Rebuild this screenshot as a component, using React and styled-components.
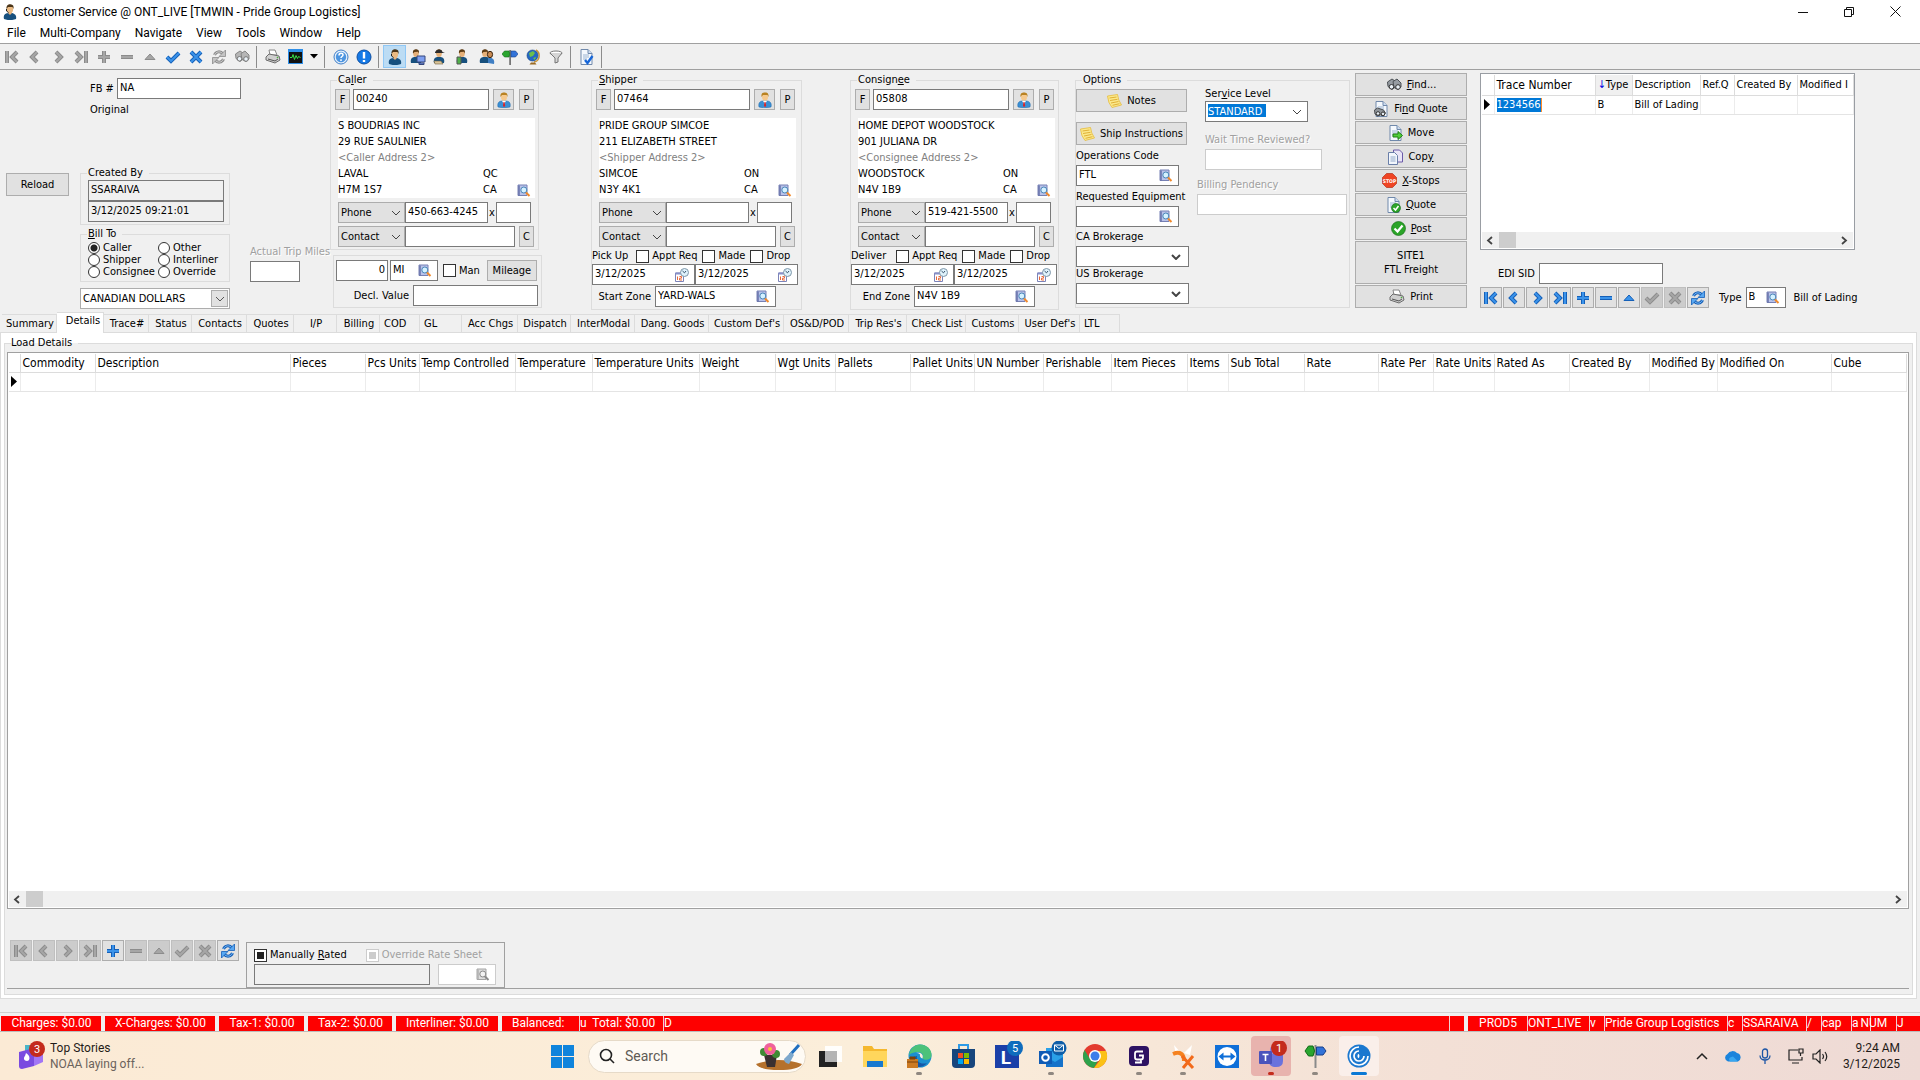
import React, { useId } from "react";
import styled, { createGlobalStyle, css } from "styled-components";

const formFont = '"DejaVu Sans Condensed", "DejaVu Sans", sans-serif';
const shellFont = 'Roboto, "Noto Sans", sans-serif';

const chevron = (color, width) =>
  `url("data:image/svg+xml,%3Csvg xmlns='http://www.w3.org/2000/svg' width='10' height='6'%3E%3Cpath d='M1 1l4 4 4-4' fill='none' stroke='%23${color}' stroke-width='${width}'/%3E%3C/svg%3E")`;

const GlobalStyle = createGlobalStyle`
  * { box-sizing: border-box; }
  body { margin: 0; background: #f0f0f0; }
  button, input, select { font: inherit; color: inherit; margin: 0; border-radius: 0; }
  fieldset { margin: 0; padding: 0; min-width: 0; }
  legend { padding: 0; }
  svg { display: block; flex: none; }
`;

/* ---------- window frame ---------- */

const Desktop = styled.div`
  min-height: 100vh;
  display: flex;
  flex-direction: column;
  background: #f0f0f0;
  color: #000;
  font: 11px/14px ${formFont};
  overflow: hidden;
`;

const TitleBar = styled.header`
  display: flex;
  align-items: center;
  gap: 5px;
  height: 23px;
  padding: 0 2px;
  background: #fff;
  font: 12px/16px ${shellFont};
`;

const WindowButtons = styled.div`
  display: flex;
  margin-left: auto;
`;

const WindowButton = styled.button`
  display: grid;
  place-items: center;
  width: 46px;
  height: 20px;
  padding: 0;
  border: 0;
  background: none;
`;

const MenuBar = styled.nav`
  display: flex;
  gap: 14px;
  height: 20px;
  padding-left: 7px;
  background: #fff;
  font: 12px/20px ${shellFont};
`;

const MenuItem = styled.button`
  padding: 0;
  border: 0;
  background: none;
`;

const Toolbar = styled.div`
  display: flex;
  align-items: center;
  height: 27px;
  border-top: 1px solid #a0a0a0;
  border-bottom: 1px solid #a0a0a0;
`;

const ToolButton = styled.button`
  display: grid;
  place-items: center;
  width: ${(p) => (p.$narrow ? 14 : 23)}px;
  height: 23px;
  padding: 0;
  border: 1px solid ${(p) => (p.$on ? "#90c8f6" : "transparent")};
  background: ${(p) => (p.$on ? "#bcdcf4" : "none")};
`;

const ToolDivider = styled.span`
  width: 1px;
  height: 22px;
  margin: 0 4px 0 3px;
  background: #8c8c8c;
`;

/* ---------- form controls ---------- */

const Button = styled.button`
  display: flex;
  align-items: center;
  justify-content: center;
  gap: 5px;
  flex: none;
  width: ${(p) => p.$w}px;
  height: ${(p) => p.$h || 21}px;
  padding: 0;
  border: 1px solid #adadad;
  background: #e1e1e1;
  white-space: pre-line;
`;

const TextBox = styled.input`
  display: block;
  flex: none;
  width: ${(p) => p.$w}px;
  height: 21px;
  padding: 0 2px 2px;
  border: 1px solid ${(p) => (p.disabled ? "#cccccc" : "#7a7a7a")};
  background: ${(p) => (p.readOnly ? "#f0f0f0" : "#fff")};
  text-align: ${(p) => (p.$right ? "right" : "left")};
  outline: 0;
`;

const Caption = styled.label`
  display: block;
  white-space: nowrap;
  color: ${(p) => (p.$dim ? "#a0a0a0" : "#000")};
  text-shadow: ${(p) => (p.$dim ? "1px 1px 0 #fff" : "none")};
  width: ${(p) => (p.$w ? `${p.$w}px` : "auto")};
  text-align: ${(p) => (p.$w ? "right" : "left")};
  margin-top: ${(p) => p.$mt || 0}px;
`;

const Combo = styled.select`
  appearance: none;
  display: block;
  flex: none;
  width: ${(p) => p.$w}px;
  height: 21px;
  padding: 0 2px;
  border: 1px solid ${(p) => (p.$gray ? "#adadad" : "#7a7a7a")};
  background: ${(p) => (p.$gray ? "#e1e1e1" : "#fff")} ${(p) => chevron("444444", p.$bold ? 2 : 1)}
    no-repeat right ${(p) => (p.$gray ? 3 : 7)}px center;
  outline: 0;
`;

const CurrencyFrame = styled.div`
  display: flex;
  width: 150px;
  height: 21px;
  margin-top: 6px;
  border: 1px solid #adadad;
  background: #fff;
`;

const CurrencySelect = styled.select`
  appearance: none;
  flex: 1;
  padding: 0 2px;
  border: 0;
  outline: 0;
  background: ${chevron("555555", 1)} no-repeat right 4px center,
    linear-gradient(#e1e1e1, #e1e1e1) no-repeat right 2px center / 15px 15px,
    linear-gradient(#adadad, #adadad) no-repeat right 1px center / 17px 17px;
`;

const LevelFrame = styled.div`
  display: grid;
  align-items: center;
  width: 103px;
  height: 21px;
  padding: 2px;
  border: 1px solid #7a7a7a;
  background: #fff;
`;

const LevelSelect = styled.select`
  appearance: none;
  width: 97px;
  height: 15px;
  padding: 0;
  border: 0;
  outline: 0;
  color: #fff;
  background: ${chevron("444444", 1)} no-repeat right 3px center,
    linear-gradient(#0078d7, #0078d7) no-repeat left top / 58px 13px;
  line-height: 13px;
`;

const Field = styled.div`
  display: flex;
  align-items: center;
  flex: none;
  width: ${(p) => p.$w}px;
  height: 21px;
  padding-right: 5px;
  border: 1px solid ${(p) => (p.$dim ? "#cccccc" : "#7a7a7a")};
  background: #fff;
`;

const FieldInput = styled.input`
  flex: 1;
  min-width: 0;
  padding: 0 2px 2px;
  border: 0;
  background: none;
  outline: 0;
`;

const IconButton = styled.button`
  padding: 0;
  border: 0;
  background: none;
`;

const CheckInput = styled.input`
  appearance: none;
  width: 13px;
  height: 13px;
  border: 1px solid ${(p) => (p.disabled ? "#cccccc" : "#333")};
  background: ${(p) => (p.$mixed ? (p.disabled ? "#cccccc" : "#222") : "#fff")};
  box-shadow: inset 0 0 0 2px #fff;
`;

const RadioInput = styled.input`
  appearance: none;
  width: 12px;
  height: 12px;
  border: 1px solid #333;
  border-radius: 50%;
  background: #fff;
  &:checked { background: radial-gradient(circle, #222 0 3px, #fff 4px); }
`;

const Choice = styled.label`
  display: flex;
  align-items: center;
  gap: 3px;
  white-space: nowrap;
  color: ${(p) => (p.$dim ? "#a0a0a0" : "#000")};
  line-height: ${(p) => (p.$tight ? 12 : 14)}px;
`;

const Row = styled.div`
  display: flex;
  align-items: ${(p) => p.$align || "center"};
  gap: ${(p) => p.$gap || 0}px;
  margin-top: ${(p) => p.$mt || 0}px;
  padding-left: ${(p) => p.$pl || 0}px;
`;

const Stack = styled.div`
  display: flex;
  flex-direction: column;
  align-items: flex-start;
  margin-top: ${(p) => p.$mt || 0}px;
  padding-left: ${(p) => p.$pl || 0}px;
`;

const Group = styled.fieldset`
  width: ${(p) => p.$w}px;
  border: 1px solid #dcdcdc;
  padding-bottom: ${(p) => p.$pb || 0}px;
`;

const Legend = styled.legend`
  margin-left: ${(p) => (p.$near ? 4 : 6)}px;
  padding: 0 6px 0 ${(p) => (p.$near ? 0 : 1)}px;
`;

/* ---------- form area ---------- */

const FormArea = styled.section`
  display: flex;
  align-items: flex-start;
  min-height: 242px;
  padding-top: 3px;
`;

const OrderColumn = styled.div`
  flex: none;
  width: 330px;
  padding-top: 5px;
`;

const PartyColumn = styled.div`
  flex: none;
  width: ${(p) => p.$w}px;
`;

const AddressCard = styled.div`
  display: grid;
  grid-template-columns: 145px 34px 18px;
  grid-auto-rows: 16px;
  align-items: center;
  width: 197px;
  height: 80px;
  margin: 8px 0 4px 7px;
  background: #fff;
  white-space: nowrap;
`;

const AddressLine = styled.span`
  grid-column: ${(p) => (p.$wide ? "1 / -1" : "auto")};
  color: ${(p) => (p.$dim ? "#808080" : "#000")};
`;

const MileageBox = styled.div`
  width: 209px;
  height: 53px;
  margin: 5px 0 0 3px;
  padding: 4px 2px 0;
  border: 1px solid #dcdcdc;
`;

const RadioGrid = styled.div`
  display: grid;
  grid-template-columns: 70px 70px;
  grid-auto-rows: 12px;
  padding: 1px 0 3px 7px;
`;

const ActionColumn = styled.div`
  display: flex;
  flex-direction: column;
  flex: none;
  gap: 1px;
  width: 112px;
  margin: 0 13px 0 5px;
`;

const TraceColumn = styled.div`
  flex: none;
  width: 375px;
`;

const TraceFrame = styled.div`
  display: flex;
  flex-direction: column;
  height: 177px;
  padding: 1px;
  border: 1px solid #999da3;
  background: #fff;
  overflow: hidden;
`;

const Grid = styled.table`
  width: ${(p) => p.$w}px;
  table-layout: fixed;
  border-collapse: collapse;
  white-space: nowrap;
`;

const HeadCell = styled.th`
  width: ${(p) => p.$w}px;
  height: ${(p) => p.$h}px;
  padding: 0 2px;
  border-right: 1px solid #dcdcdc;
  border-bottom: 1px solid #dcdcdc;
  background: ${(p) => (p.$sorted ? "#f0f0f0" : "#fff")};
  font: ${(p) => (p.$large ? "12px" : "11px")}/14px ${formFont};
  text-align: left;
  overflow: hidden;
`;

const BodyCell = styled.td`
  height: 19px;
  padding: 0 2px;
  border-right: 1px solid #ececec;
  border-bottom: 1px solid #e4e4e4;
  overflow: hidden;
`;

const SortMark = styled.span`color: #0000e0;`;

const Selected = styled.span`
  display: inline-block;
  color: #fff;
  background: #0078d7;
  border-right: 1px solid #ff8c28;
`;

const Scroll = styled.div`
  display: flex;
  align-items: center;
  height: 16px;
  margin-top: auto;
  padding: 0 5px 0 4px;
  background: #f0f0f0;
`;

const ScrollArrow = styled.button`
  padding: 0;
  border: 0;
  background: none;
  width: 7px;
`;

const ScrollThumb = styled.span`
  width: 17px;
  height: 16px;
  margin: 0 auto 0 6px;
  background: #cdcdcd;
`;

const Navigator = styled.div`
  display: flex;
  gap: 1px;
`;

const NavButton = styled.button`
  display: grid;
  place-items: center;
  width: 22px;
  height: 21px;
  padding: 0;
  border: 1px solid ${(p) => (p.disabled ? "#bfbfbf" : "#adadad")};
  background: ${(p) => (p.disabled ? "#cccccc" : "#e1e1e1")};
`;

/* ---------- tabs and load details ---------- */

const TabStrip = styled.div`
  display: flex;
  align-items: flex-end;
  height: 20px;
  padding-left: 2px;
`;

const Tab = styled.button`
  flex: none;
  width: ${(p) => p.$w}px;
  height: 18px;
  padding: ${(p) => (p.$left ? "0 0 0 4px" : "0 0 0 2px")};
  border: 1px solid #dcdcdc;
  border-left-width: 0;
  border-bottom: 0;
  background: #f0f0f0;
  text-align: ${(p) => (p.$left ? "left" : "center")};
  white-space: nowrap;
  ${(p) => p.$on && css`
    height: 21px;
    margin-bottom: -1px;
    padding: 0 0 5px 6px;
    background: #fff;
    z-index: 1;
  `}
`;

const Page = styled.section`
  display: flex;
  flex: 1;
  margin-right: 3px;
  padding: 3px;
  border: 1px solid #dcdcdc;
  background: #fff;
`;

const LoadGroup = styled.fieldset`
  display: flex;
  flex-direction: column;
  flex: 1;
  padding: 2px 3px 5px 2px;
  border: 1px solid #dcdcdc;
  background: #f0f0f0;
`;

const GridFrame = styled.div`
  display: flex;
  flex-direction: column;
  flex: 1;
  padding: 1px;
  border: 1px solid #a0a0a0;
  background: #fff;
  overflow: hidden;
`;

const RateArea = styled.div`
  display: flex;
  align-items: flex-start;
  gap: 7px;
  height: 80px;
  padding: 31px 0 0 3px;
  border-bottom: 1px solid #a0a0a0;
`;

const RatePanel = styled.div`
  display: grid;
  grid-template-columns: 176px 58px;
  gap: 2px 8px;
  margin-top: 2px;
  padding: 5px 8px 2px 7px;
  width: 259px;
  border: 1px solid #a0a0a0;
`;

const ChoiceLine = styled.div`
  display: flex;
  grid-column: 1 / -1;
  gap: 19px;
`;

/* ---------- status bar ---------- */

const StatusBar = styled.footer`
  display: flex;
  gap: 4px;
  height: 20px;
  margin-top: 13px;
  padding: 3px 0 0 1px;
  border-top: 1px solid #d0d0d0;
  border-bottom: 1px solid #bcbcbc;
  font: 12px/15px ${shellFont};
  color: #fff;
`;

const StatusRun = styled.div`
  display: flex;
  flex: ${(p) => (p.$grow ? "1" : "none")};
  background: #fe0000;
`;

const StatusCell = styled.span`
  flex: ${(p) => (p.$w ? "none" : "1")};
  width: ${(p) => (p.$w ? `${p.$w}px` : "auto")};
  border-left: 1px solid ${(p) => (p.$line ? "#f0d0d0" : "transparent")};
  text-align: ${(p) => (p.$center ? "center" : "left")};
  white-space: pre;
  overflow: hidden;
`;

const LockCell = styled(StatusCell)`
  display: flex;
  gap: 2px;
  background: linear-gradient(#f0d0d0, #f0d0d0) no-repeat 18px 0 / 1px 100%;
`;

/* ---------- taskbar ---------- */

const Taskbar = styled.footer`
  display: grid;
  grid-template-columns: 1fr auto 1fr;
  align-items: center;
  height: 48px;
  background: linear-gradient(90deg, #fbead5, #fbeeda 45%, #f3e0d6 75%, #eedad5);
  font: 12px/16px ${shellFont};
  color: #1f1b18;
`;

const Widget = styled.button`
  display: flex;
  align-items: center;
  gap: 5px;
  width: 190px;
  padding: 0 0 0 17px;
  border: 0;
  background: none;
  text-align: left;
`;

const Muted = styled.span`
  display: block;
  color: #6b635c;
`;

const Dock = styled.div`
  display: flex;
  align-items: center;
  padding-left: 12px;
`;

const StartButton = styled.button`
  width: 23px;
  margin-right: 14px;
  padding: 0;
  border: 0;
  background: none;
`;

const SearchBox = styled.label`
  display: flex;
  align-items: center;
  gap: 10px;
  width: 218px;
  height: 33px;
  margin-right: 3px;
  padding: 0 3px 0 10px;
  border: 1px solid #e6dac8;
  border-radius: 17px;
  background: #fefaf4;
`;

const SearchInput = styled.input`
  flex: 1;
  min-width: 0;
  padding: 0;
  border: 0;
  background: none;
  outline: 0;
  font-size: 14px;
  &::placeholder { color: #5f5a55; opacity: 1; }
`;

const AppButton = styled.button`
  display: grid;
  grid-template-rows: 1fr 3px;
  justify-items: center;
  align-items: center;
  width: 40px;
  height: 40px;
  margin: 0 2px;
  padding: 3px 0 1px;
  border: 0;
  border-radius: 4px;
  background: ${(p) => p.$bg || "none"};
`;

const Running = styled.span`
  width: ${(p) => (p.$wide ? 16 : 6)}px;
  height: 3px;
  border-radius: 2px;
  background: ${(p) => p.$c || "transparent"};
`;

const Tray = styled.div`
  display: flex;
  align-items: center;
  justify-self: end;
  gap: 16px;
  padding-right: 20px;
`;

const TrayGroup = styled.div`
  display: flex;
  align-items: center;
  gap: 7px;
`;

const Clock = styled.div`
  width: 64px;
  text-align: right;
`;

/* ---------- drawings ---------- */

const glyphs = {
  first: "M3 2v12M13 3L8 8l5 5",
  prev: "M10 3L5 8l5 5",
  next: "M6 3l5 5-5 5",
  last: "M13 2v12M3 3l5 5-5 5",
  plus: "M8 2v12M2 8h12",
  minus: "M2 8h12",
  check: "M2 8l4 4 8-8",
  cross: "M3 3l10 10M13 3L3 13",
};

function Glyph({ name, tone = "blue" }) {
  const [edge, fill] = tone === "blue" ? ["#1560b8", "#3b93ea"] : ["#8c8c8c", "#a6a6a6"];
  if (name === "up")
    return <svg width="16" height="16"><path d="M3 10.500l5-5.500 5 5.500z" fill={fill} stroke={edge} /></svg>;
  if (name === "refresh")
    return (
      <svg width="16" height="16" fill="none">
        <path d="M3.500 6C5 2.200 9.500 1.800 12 5M12.500 10C11 13.800 6.500 14.200 4 11" stroke={edge} strokeWidth="3" />
        <path d="M3.500 6C5 2.200 9.500 1.800 12 5M12.500 10C11 13.800 6.500 14.200 4 11" stroke={tone === "blue" ? "#7cbcf8" : "#d0d0d0"} />
        <path d="M14.500 1v6.500H8zM1.500 15V8.500H8z" fill={tone === "blue" ? "#59a8f2" : "#c4c4c4"} stroke={edge} strokeWidth=".8" />
      </svg>
    );
  return (
    <svg width="16" height="16" fill="none">
      <path d={glyphs[name]} stroke={edge} strokeWidth="4" />
      <path d={glyphs[name]} stroke={fill} strokeWidth="2" />
    </svg>
  );
}

const AgentIcon = () => (
  <svg width="16" height="16">
    <path d="M2 15c-1-4 1-6 5-6h2c3 0 6 2 5 6-3 1.500-9 1.500-12 0z" fill="#17507e" />
    <path d="M6 9l2 2 2-2v-2H6z" fill="#e9b47e" />
    <ellipse cx="8" cy="5" rx="3.200" ry="4" fill="#e9b982" />
    <path d="M4.500 5C4 1 7 0 8.500.300 11 .500 12 2 11.500 5L10.500 3 6 3z" fill="#4a3417" />
    <path d="M4.500 5v2l2 1.500" fill="none" stroke="#222" />
  </svg>
);

const PersonIcon = () => (
  <svg width="14" height="16" viewBox="0 0 14 16">
    <path d="M1 15c-1-4 1-6 4-6h4c3 0 5 2 4 6-3 1-9 1-12 0z" fill="#3a8fd4" stroke="#1f69ab" strokeWidth=".5" />
    <path d="M5 9l2 3 2-3z" fill="#fff" />
    <path d="M6.500 10h1l.7 4L7 15l-1-1z" fill="#d22" />
    <ellipse cx="7" cy="5" rx="3" ry="3.800" fill="#f6c98d" />
    <path d="M3.500 5C3 1 5 .4 7 .4S11 1 10.500 5L9.500 3 5 3z" fill="#b98221" />
  </svg>
);

const OperatorIcon = ({ kind }) => (
  <svg width="16" height="16">
    <path d="M1 14c-1-4 1-6 4-6h2c3 0 5 2 4 6z" fill="#17507e" />
    <ellipse cx="6" cy="4.500" rx="2.800" ry="3.500" fill="#e5b078" />
    <path d="M3 4.500C2.500 1 4.500.3 6 .3S9.500 1 9 4.500L8 2.800 4.500 3z" fill="#5c3b14" />
    {kind === "pc" && <path d="M7 7h8v6H7zM9 14h5v1.500H9z" fill="#7e9ff0" stroke="#34467c" />}
    {kind === "driver" && <path d="M2 3.500C3 0 9 0 9.500 3L12 4H2z" fill="#2b2b2b" />}
    {kind === "driver" && <path d="M1 12h7l2 3H2z" fill="#d9c49a" stroke="#71603c" strokeWidth=".6" />}
    {kind === "phone" && <path d="M1 8h4v7H1z" fill="#4fb04a" stroke="#555" />}
    {kind === "pair" && <path d="M9 14V9c4-1 7 1 6 6z" fill="#3f7fc4" />}
    {kind === "pair" && <ellipse cx="11" cy="5.500" rx="2.600" ry="3.200" fill="#c98a52" stroke="#3a2410" />}
  </svg>
);

const SignIcon = ({ size = 16 }) => (
  <svg width={size} height={size} viewBox="0 0 16 16">
    <path d="M7.200 1h1.800v15H7.200z" fill="#777" />
    <path d="M0 5l2.500-3H7q1.500 3 0 6H2.500z" fill="#2aa52f" stroke="#126a18" strokeWidth=".6" />
    <path d="M9 2h4.500L16 5l-2.500 3H9z" fill="#3272d8" stroke="#173f88" strokeWidth=".6" />
  </svg>
);

const GlobeIcon = () => (
  <svg width="16" height="16">
    <path d="M11 1c5 3 4 11-2 12" fill="none" stroke="#c8963c" strokeWidth="1.500" />
    <circle cx="7.500" cy="6.500" r="5.500" fill="#2468c4" stroke="#17427f" strokeWidth=".6" />
    <path d="M4 4l4-2 2 2-2 3-3 1zM8 9l3-1-1 3z" fill="#6cc04b" />
    <path d="M4.500 15.500h7l-1.500-2H6z" fill="#9a6a24" />
  </svg>
);

const BinocularsIcon = ({ dark }) => (
  <svg width="16" height="13" viewBox="0 0 16 13">
    <g stroke={dark ? "#4c5156" : "#858585"} fill={dark ? "#969ca2" : "#b6b6b6"}>
      <path d="M1.500 4L6 1l3 2v6l-3 2.500-4-3z" />
      <path d="M7 3.500L11 1l4 4v4l-3 2.500-4-2z" />
    </g>
    <circle cx="5.500" cy="8.800" r="2.300" fill="#e9f1f7" stroke={dark ? "#333" : "#777"} />
    <circle cx="12" cy="9" r="2.300" fill="#e9f1f7" stroke={dark ? "#333" : "#777"} />
  </svg>
);

const PrinterIcon = () => (
  <svg width="16" height="15" viewBox="0 0 16 15">
    <path d="M4 1h6l2 5H5z" fill="#fff" stroke="#888" />
    <path d="M1 8l3-3 10 2 1 4-5 3-9-3z" fill="#cfcfcf" stroke="#6c6c6c" />
    <path d="M3 10l7 2 3-2" fill="none" stroke="#555" />
    <circle cx="12.500" cy="8.500" r=".8" fill="#49b33c" />
  </svg>
);

const SheetIcon = ({ mark }) => (
  <svg width="15" height="16" viewBox="0 0 15 16">
    <path d="M2 .5h7l4 4v11H2z" fill="#f4f8fd" stroke="#7089ab" />
    <path d="M9 .5v4h4" fill="#cddcf0" stroke="#7089ab" />
    <path d="M4 6h6M4 8h6M4 10h4" stroke="#9db5d2" />
    {mark === "arrow" && <path d="M5 9h5V6.500l4.500 4-4.500 4V12H5z" fill="#50cf3a" stroke="#1e7d14" />}
    {mark === "tick" && <circle cx="10" cy="11" r="4.500" fill="#2da52b" stroke="#136912" strokeWidth=".6" />}
    {mark === "tick" && <path d="M7.500 11l2 2 3-4" fill="none" stroke="#fff" strokeWidth="1.500" />}
    {mark === "blue" && <path d="M6 11l2.500 3 5-7" fill="none" stroke="#1766d8" strokeWidth="2.400" />}
    {mark === "find" && <path d="M.5 9l3-2 6 2 2 3-2 3-3-1-3 1-2.500-2z" fill="#8f959b" stroke="#4a4d50" />}
    {mark === "find" && <circle cx="4" cy="12.500" r="1.800" fill="#e9f1f7" stroke="#333" />}
    {mark === "find" && <circle cx="9" cy="12.800" r="1.800" fill="#e9f1f7" stroke="#333" />}
  </svg>
);

const CopyIcon = () => (
  <svg width="15" height="16" viewBox="0 0 15 16">
    <path d="M5.500 1h6l3 3v9h-9z" fill="#e9e4f6" stroke="#6b5aa8" />
    <path d="M.5 3.500h6l3 3v9h-9z" fill="#f2f6fc" stroke="#6a7fa8" />
    <path d="M2.500 8h5M2.500 10h5M2.500 12h5" stroke="#93a9ca" />
  </svg>
);

const TickBall = () => (
  <svg width="15" height="15" viewBox="0 0 15 15">
    <circle cx="7.500" cy="7.500" r="7" fill="#2ba428" stroke="#116610" strokeWidth=".6" />
    <path d="M3.500 7.500l3 3 5-6" fill="none" stroke="#fff" strokeWidth="2.200" />
  </svg>
);

const StopIcon = () => (
  <svg width="15" height="15" viewBox="0 0 15 15">
    <path d="M4.500.5h6l4 4v6l-4 4h-6l-4-4v-6z" fill="#ef4423" stroke="#a81e08" strokeWidth=".6" />
    <text x="7.500" y="9.500" fill="#fff" fontSize="5" fontWeight="700" textAnchor="middle">STOP</text>
  </svg>
);

const NoteIcon = () => (
  <svg width="15" height="14" viewBox="0 0 15 14">
    <path d="M.5 2l10-1.500Q11 6 14.500 11L5 13.500Q1 9 .5 2z" fill="#fbe98c" stroke="#e6bb3c" strokeWidth=".8" />
    <path d="M2.500 4l7-1M3 6.500l7.500-1.200M4 9l7.500-1.500M5.500 11.300l7-1.600" stroke="#dca92c" strokeWidth=".9" />
  </svg>
);

const LookupIcon = ({ dim }) => (
  <svg width="14" height="13" viewBox="0 0 14 13">
    <path d="M1 1h9v10.500H1z" fill={dim ? "#dcdcdc" : "#b9c2ea"} stroke={dim ? "#a4a4a4" : "#7680b4"} />
    <path d="M2 1.500v10" stroke={dim ? "#b0b0b0" : "#6670a8"} strokeWidth="1.500" />
    <circle cx="6.800" cy="6" r="3" fill={dim ? "#f2f2f2" : "#d4f1ff"} stroke={dim ? "#8a8a8a" : "#4a86b8"} />
    <path d="M9 8.500l3.500 3.500" stroke={dim ? "#8a8a8a" : "#f08a2c"} strokeWidth="2" />
  </svg>
);

const CalendarIcon = () => (
  <svg width="14" height="14" viewBox="0 0 14 14">
    <path d="M.5 5h8v8.500h-8z" fill="#fff" stroke="#7c83b8" />
    <path d="M.5 4.500h8v2h-8z" fill="#8890c8" />
    <path d="M2.500 8.500v3.500M4.500 8.500h2v1.700h-2V12h2.500" fill="none" stroke="#e8683a" />
    <circle cx="9.500" cy="4.500" r="4" fill="#dff2fb" stroke="#7e96a8" />
    <path d="M7.500 3l2 1.800L11 3" fill="none" stroke="#33506a" />
  </svg>
);

const Dot = ({ c }) => (
  <svg width="16" height="16">
    {c === "?" ? <circle cx="8" cy="8" r="7" fill="#e4eefa" stroke="#3f7fc8" /> : <circle cx="8" cy="8" r="7" fill="#1579e6" stroke="#0d4fa3" />}
    {c === "?" ? <circle cx="8" cy="8" r="5.200" fill="#4d95e0" /> : null}
    {c === "?" ? <path d="M6 6.500c0-3 4-3 4-.5 0 1.500-2 1.500-2 3M8 10.300v1.700" fill="none" stroke="#fff" strokeWidth="1.500" /> : <path d="M8 3v6.500M8 11v2" stroke="#fff" strokeWidth="2.400" />}
  </svg>
);

const Caret = ({ dir }) => (
  <svg width="7" height="9"><path d={dir === "left" ? "M6 1L2 4.500 6 8" : "M1 1l4 3.500L1 8"} fill="none" stroke="#444" strokeWidth="1.800" /></svg>
);

const RowMark = () => <svg width="6" height="11"><path d="M0 0l6 5.500L0 11z" /></svg>;

/* ---------- pieces ---------- */

const U = styled.u``;

function Check({ label, mixed, dim }) {
  return <Choice $dim={dim}><CheckInput type="checkbox" $mixed={mixed} defaultChecked={mixed} disabled={dim} />{label}</Choice>;
}

function LookupField({ id, w, value, label, dim }) {
  return (
    <Field $w={w} $dim={dim}>
      <FieldInput id={id} defaultValue={value} aria-label={label} disabled={dim} />
      <IconButton type="button" aria-label={`Look up ${label}`}><LookupIcon dim={dim} /></IconButton>
    </Field>
  );
}

function DateField({ label, value }) {
  return (
    <Field $w={103}>
      <FieldInput defaultValue={value} aria-label={label} />
      <IconButton type="button" aria-label={`Pick ${label}`}><CalendarIcon /></IconButton>
    </Field>
  );
}

function Scrollbar() {
  return (
    <Scroll>
      <ScrollArrow type="button" aria-label="Scroll left"><Caret dir="left" /></ScrollArrow>
      <ScrollThumb />
      <ScrollArrow type="button" aria-label="Scroll right"><Caret dir="right" /></ScrollArrow>
    </Scroll>
  );
}

const navNames = ["first", "prev", "next", "last", "plus", "minus", "up", "check", "cross", "refresh"];

function RecordNavigator({ active }) {
  return (
    <Navigator>
      {navNames.map((n) => (
        <NavButton key={n} type="button" aria-label={n} disabled={!active.includes(n)}>
          <Glyph name={n} tone={active.includes(n) ? "blue" : "gray"} />
        </NavButton>
      ))}
    </Navigator>
  );
}

function Party({ name, legend, code, lines, region, country, phone, w, children }) {
  return (
    <Group $w={w} $pb={2}>
      <Legend>{legend}</Legend>
      <Row $mt={2} $pl={4} $gap={3}>
        <Button type="button" $w={15}>F</Button>
        <TextBox $w={136} defaultValue={code} aria-label={`${name} code`} />
        <Row $gap={5} $pl={1}>
          <Button type="button" $w={21} aria-label={`${name} profile`}><PersonIcon /></Button>
          <Button type="button" $w={15}>P</Button>
        </Row>
      </Row>
      <AddressCard>
        <AddressLine $wide>{lines[0]}</AddressLine>
        <AddressLine $wide>{lines[1]}</AddressLine>
        <AddressLine $wide $dim>{`<${name} Address 2>`}</AddressLine>
        <AddressLine>{lines[2]}</AddressLine>
        <AddressLine>{region}</AddressLine>
        <AddressLine />
        <AddressLine>{lines[3]}</AddressLine>
        <AddressLine>{country}</AddressLine>
        <IconButton type="button" aria-label={`Look up ${name} address`}><LookupIcon /></IconButton>
      </AddressCard>
      <Row $pl={7}>
        <Combo $w={67} $gray aria-label={`${name} phone type`}><option>Phone</option></Combo>
        <TextBox $w={83} defaultValue={phone} aria-label={`${name} phone`} />
        <Row $gap={1} $pl={1}>
          x<TextBox $w={35} aria-label={`${name} extension`} />
        </Row>
      </Row>
      <Row $mt={3} $pl={7}>
        <Combo $w={67} $gray aria-label={`${name} contact type`}><option>Contact</option></Combo>
        <TextBox $w={110} aria-label={`${name} contact`} />
        <Row $pl={4}><Button type="button" $w={15}>C</Button></Row>
      </Row>
      {children}
    </Group>
  );
}

function Schedule({ title, zoneLabel, zone }) {
  const id = useId();
  return (
    <>
      <Row $mt={2} $gap={7}>
        <Caption as="span">{title}</Caption>
        <Row $gap={5} $pl={title === "Pick Up" ? 1 : 3}>
          <Check label="Appt Req" /><Check label="Made" /><Check label="Drop" />
        </Row>
      </Row>
      <Row $mt={1}>
        <DateField label={`${title} from`} value="3/12/2025" />
        <DateField label={`${title} to`} value="3/12/2025" />
      </Row>
      <Row $mt={1} $gap={4}>
        <Caption htmlFor={id} $w={59}>{zoneLabel}</Caption>
        <LookupField id={id} w={121} value={zone} label={zoneLabel} />
      </Row>
    </>
  );
}

const tabs = [
  ["Summary", 55], ["Details", 47], ["Trace#", 45], ["Status", 43], ["Contacts", 55], ["Quotes", 47], ["I/P", 43],
  ["Billing", 43], ["COD", 40, 1], ["GL", 42, 1], ["Acc Chgs", 56], ["Dispatch", 53], ["InterModal", 64],
  ["Dang. Goods", 74], ["Custom Def's", 75], ["OS&D/POD", 65], ["Trip Res's", 58], ["Check List", 59],
  ["Customs", 53], ["User Def's", 61], ["LTL", 40, 1],
];

const loadColumns = [
  ["Commodity", 75], ["Description", 195], ["Pieces", 75], ["Pcs Units", 54], ["Temp Controlled", 96],
  ["Temperature", 77], ["Temperature Units", 107], ["Weight", 76], ["Wgt Units", 60], ["Pallets", 75],
  ["Pallet Units", 64], ["UN Number", 69], ["Perishable", 68], ["Item Pieces", 76], ["Items", 41],
  ["Sub Total", 76], ["Rate", 74], ["Rate Per", 55], ["Rate Units", 61], ["Rated As", 75], ["Created By", 80],
  ["Modified By", 68], ["Modified On", 114], ["Cube", 75],
];

const actions = [
  [<BinocularsIcon dark />, <span><U>F</U>ind...</span>],
  [<SheetIcon mark="find" />, <span>Fi<U>n</U>d Quote</span>],
  [<SheetIcon mark="arrow" />, <span>Move</span>],
  [<CopyIcon />, <span>Cop<U>y</U></span>],
  [<StopIcon />, <span><U>X</U>-Stops</span>],
  [<SheetIcon mark="tick" />, <span><U>Q</U>uote</span>],
  [<TickBall />, <span><U>P</U>ost</span>],
];

/* ---------- taskbar drawings ---------- */

const Badge = ({ x, y, r = 8, fill, children }) => (
  <>
    <circle cx={x} cy={y} r={r} fill={fill} />
    <text x={x} y={y + 4} fill="#fff" fontSize="11" textAnchor="middle">{children}</text>
  </>
);

const apps = [
  { name: "Task view", art: <><rect x="1" y="8" width="18" height="16" fill="#222" /><rect x="7" y="3" width="17" height="16" fill="#fff" opacity=".9" /><rect x="7" y="8" width="12" height="11" fill="#b4b4b4" /></> },
  { name: "File Explorer", art: <><path d="M1 3h9l2 3h13v18H1z" fill="#f5b82e" /><path d="M1 8h24v16H1z" fill="#ffd65c" /><path d="M5 18h16v6H5z" fill="#1879cf" /></> },
  { name: "Edge", run: "#8f8780", art: <><circle cx="14" cy="13" r="11.500" fill="#1b8fd0" /><path d="M3 12C4 5 9 1.500 14 1.500c7 0 12 5 11.500 11-.5 5-7 5-9 3 3-6-6-9-13.500-3.500z" fill="#4cc27a" /><path d="M11 13c-1 6 4 9 10 7-4 5-12 5-15 1-2-4 1-8 5-8z" fill="#1557a8" /><path d="M16.500 15.500q-3-1-2.500-4-1-2-4-1.500c4-1 8 1 6.500 5.500z" fill="#fbeeda" /><path d="M1 16h11v9H1z" fill="#cc7a22" /><path d="M4 14h5v2H4zM1 19h11" fill="#7a4108" stroke="#7a4108" /></> },
  { name: "Store", art: <><path d="M9 6V2h9v4" fill="none" stroke="#2e9ae6" strokeWidth="2" /><path d="M2 6h23v15q0 4-4 4H6q-4 0-4-4z" fill="#17457c" /><path d="M8 10h5v5H8z" fill="#f25022" /><path d="M14 10h5v5h-5z" fill="#7fba00" /><path d="M8 16h5v5H8z" fill="#00a4ef" /><path d="M14 16h5v5h-5z" fill="#ffb900" /></> },
  { name: "L", art: <><rect x="1" y="2" width="24" height="23" fill="#1b3fa8" /><text x="12" y="21" fill="#fff" fontSize="19" fontWeight="700" textAnchor="middle">L</text><Badge x={21} y={5} fill="#0f6cbd">5</Badge></> },
  { name: "Outlook", run: "#8f8780", art: <><path d="M8 5h17v19H8z" fill="#2aa0e8" /><path d="M8 14l9 5 8-5v10H8z" fill="#1672c9" /><rect x="1" y="8" width="13" height="13" fill="#0f5bb5" /><circle cx="7.500" cy="14.500" r="3.300" fill="none" stroke="#fff" strokeWidth="2" /><circle cx="21" cy="5" r="7.500" fill="#0f5ea8" /><path d="M16.500 2h9v6h-9zl4.500 3.500L25.500 2" fill="none" stroke="#fff" /></> },
  { name: "Chrome", art: <><circle cx="13" cy="13" r="12" fill="#e33b2e" /><path d="M2.600 7A12 12 0 0 0 12 25l5-9H8z" fill="#2ea24c" /><path d="M12 25A12 12 0 0 0 24 8H13l5 9z" fill="#fbc116" /><circle cx="13" cy="13" r="6" fill="#fff" /><circle cx="13" cy="13" r="4.500" fill="#3b7de9" /></> },
  { name: "G", run: "#8f8780", art: <><rect x="3" y="3" width="20" height="20" rx="4" fill="#2d1263" /><path d="M17 8.500h-6q-2 0-2 2v4q0 2 2 2h4q2 0 2-2v-2h-4M15 16.500v3H9" fill="none" stroke="#fff" strokeWidth="1.800" /></> },
  { name: "X", run: "#8f8780", art: <><path d="M4 2l7 8-5 2zM22 2l-8 8 6 2z" fill="#fff" /><path d="M3 11c7-3 11 0 11 7" fill="none" stroke="#f58220" strokeWidth="4" /><path d="M12 13l11 12M23 13L13 25" stroke="#f26a1b" strokeWidth="3" /></> },
  { name: "TeamViewer", art: <><rect x="1" y="2" width="24" height="23" fill="#0f6fd8" /><circle cx="13" cy="13.500" r="9.500" fill="#fff" /><path d="M4.500 13.500l5-4v3h7v-3l5 4-5 4v-3h-7v3z" fill="#0f6fd8" /></> },
  { name: "Teams", bg: "#e8b3ae", run: "#c42b1c", art: <><circle cx="16" cy="7" r="4" fill="#7b83eb" /><path d="M11 11h14v7q0 6-7 6t-7-6z" fill="#6a72dd" /><rect x="1" y="8" width="13" height="13" rx="1" fill="#4b53bc" /><path d="M4.500 11.500h6M7.500 11.500V18" stroke="#fff" strokeWidth="1.600" /><Badge x={21} y={5} fill="#c42b1c">1</Badge></> },
  { name: "TruckMate", run: "#8f8780", art: <><path d="M12.500 2h2v23h-2z" fill="#8a8a8a" /><path d="M3 8l3.500-5H11q3 5 0 10H6.500z" fill="#2aa52f" stroke="#126a18" /><path d="M14.500 4H21l3 4-3 4h-6.500z" fill="#3272d8" stroke="#173f88" /></> },
  { name: "Workspace", bg: "#faefea", run: "#0a78d4", wide: true, art: <><circle cx="13" cy="13" r="11.500" fill="#1b78cf" /><path d="M13 4a9 9 0 1 0 9 9M13 8a5 5 0 1 0 5 5M13 11.500a2 2 0 0 0 0 3" fill="none" stroke="#fff" strokeWidth="1.700" /></> },
];

export default function App() {
  return (
    <Desktop>
      <GlobalStyle />
      <TitleBar>
        <AgentIcon />
        <span>Customer Service @ ONT_LIVE [TMWIN - Pride Group Logistics]</span>
        <WindowButtons>
          <WindowButton type="button" aria-label="Minimize"><svg width="10" height="10"><path d="M0 5.500h10" stroke="#111" /></svg></WindowButton>
          <WindowButton type="button" aria-label="Restore"><svg width="10" height="10" fill="none" stroke="#111"><path d="M.5 2.500h7v7h-7zM2.500 2.500v-2h7v7h-2" /></svg></WindowButton>
          <WindowButton type="button" aria-label="Close"><svg width="11" height="11"><path d="M.5.500l10 10M10.500.500l-10 10" stroke="#111" /></svg></WindowButton>
        </WindowButtons>
      </TitleBar>
      <MenuBar>
        {["File", "Multi-Company", "Navigate", "View", "Tools", "Window", "Help"].map((m) => <MenuItem key={m} type="button">{m}</MenuItem>)}
      </MenuBar>
      <Toolbar>
        {["first", "prev", "next", "last", "plus", "minus", "up"].map((n) => (
          <ToolButton key={n} type="button" aria-label={n}><Glyph name={n} tone="gray" /></ToolButton>
        ))}
        <ToolButton type="button" aria-label="Save"><Glyph name="check" /></ToolButton>
        <ToolButton type="button" aria-label="Cancel"><Glyph name="cross" /></ToolButton>
        <ToolButton type="button" aria-label="Refresh"><Glyph name="refresh" tone="gray" /></ToolButton>
        <ToolButton type="button" aria-label="Find"><BinocularsIcon /></ToolButton>
        <ToolDivider />
        <ToolButton type="button" aria-label="Print"><PrinterIcon /></ToolButton>
        <ToolButton type="button" aria-label="Monitor">
          <svg width="15" height="15"><rect x=".5" y=".5" width="14" height="14" fill="#111" stroke="#2f8fe8" /><path d="M1 1.500h13" stroke="#2f8fe8" strokeWidth="3" /><path d="M2 8.500h2l1-3 1.500 5 1.500-4 1.500 3 1-2 2 1" fill="none" stroke="#37e04a" /></svg>
        </ToolButton>
        <ToolButton type="button" $narrow aria-label="More"><svg width="8" height="5"><path d="M0 0h8L4 4.500z" /></svg></ToolButton>
        <ToolDivider />
        <ToolButton type="button" aria-label="Help"><Dot c="?" /></ToolButton>
        <ToolButton type="button" aria-label="Alert"><Dot c="!" /></ToolButton>
        <ToolDivider />
        <ToolButton type="button" $on aria-label="Customer service"><AgentIcon /></ToolButton>
        <ToolButton type="button" aria-label="Dispatch desk"><OperatorIcon kind="pc" /></ToolButton>
        <ToolButton type="button" aria-label="Drivers"><OperatorIcon kind="driver" /></ToolButton>
        <ToolButton type="button" aria-label="Calls"><OperatorIcon kind="phone" /></ToolButton>
        <ToolButton type="button" aria-label="Clients"><OperatorIcon kind="pair" /></ToolButton>
        <ToolButton type="button" aria-label="Routes"><SignIcon /></ToolButton>
        <ToolButton type="button" aria-label="Map"><GlobeIcon /></ToolButton>
        <ToolButton type="button" aria-label="Filter"><svg width="14" height="14"><ellipse cx="7" cy="3" rx="6" ry="2" fill="#fff" stroke="#777" /><path d="M1 3l5 5v5l3-1V8l4-5" fill="#d5d5d5" stroke="#777" /></svg></ToolButton>
        <ToolDivider />
        <ToolButton type="button" aria-label="Check document"><SheetIcon mark="blue" /></ToolButton>
        <ToolDivider />
      </Toolbar>

      <FormArea>
        <OrderColumn>
          <Row $pl={90}>
            <Caption htmlFor="fb">FB #&nbsp;</Caption>
            <TextBox id="fb" $w={124} defaultValue="NA" />
          </Row>
          <Row $pl={90} $mt={4}>Original</Row>
          <Row $align="flex-start" $mt={49} $pl={6} $gap={11}>
            <Stack $mt={7}><Button type="button" $w={63} $h={23}>Reload</Button></Stack>
            <Stack>
              <Group $w={150} $pb={2}>
                <Legend>Created By</Legend>
                <Stack $pl={7}>
                  <TextBox $w={136} readOnly defaultValue="SSARAIVA" aria-label="Created by user" />
                  <TextBox $w={136} readOnly defaultValue="3/12/2025 09:21:01" aria-label="Created on" />
                </Stack>
              </Group>
              <Stack $mt={2}>
                <Group $w={150}>
                  <Legend><U>B</U>ill To</Legend>
                  <RadioGrid>
                    {["Caller", "Other", "Shipper", "Interliner", "Consignee", "Override"].map((r) => (
                      <Choice key={r} $tight><RadioInput type="radio" name="billTo" defaultChecked={r === "Caller"} />{r}</Choice>
                    ))}
                  </RadioGrid>
                </Group>
              </Stack>
              <CurrencyFrame>
                <CurrencySelect aria-label="Currency"><option>CANADIAN DOLLARS</option></CurrencySelect>
              </CurrencyFrame>
            </Stack>
            <Stack $mt={79} $pl={9}>
              <Caption htmlFor="miles" $dim>Actual Trip Miles</Caption>
              <Row $mt={2}><TextBox id="miles" $w={50} /></Row>
            </Stack>
          </Row>
        </OrderColumn>

        <PartyColumn $w={261}>
          <Party name="Caller" legend={<>Ca<U>l</U>ler</>} w={209} code="00240" phone="450-663-4245"
            lines={["S BOUDRIAS INC", "29 RUE SAULNIER", "LAVAL", "H7M 1S7"]} region="QC" country="CA" />
          <MileageBox>
            <Row $gap={2}>
              <TextBox $w={52} $right defaultValue="0" aria-label="Distance" />
              <LookupField w={48} value="MI" label="Distance unit" />
              <Row $gap={7} $pl={3}>
                <Check label="Man" />
                <Button type="button" $w={50}>Mileage</Button>
              </Row>
            </Row>
            <Row $mt={4} $gap={4}>
              <Caption htmlFor="decl" $w={73}>Decl. Value</Caption>
              <TextBox id="decl" $w={125} />
            </Row>
          </MileageBox>
        </PartyColumn>

        <PartyColumn $w={259}>
          <Party name="Shipper" legend={<><U>S</U>hipper</>} w={211} code="07464" phone=""
            lines={["PRIDE GROUP SIMCOE", "211 ELIZABETH STREET", "SIMCOE", "N3Y 4K1"]} region="ON" country="CA">
            <Schedule title="Pick Up" zoneLabel="Start Zone" zone="YARD-WALS" />
          </Party>
        </PartyColumn>

        <PartyColumn $w={225}>
          <Party name="Consignee" legend={<>Consign<U>e</U>e</>} w={209} code="05808" phone="519-421-5500"
            lines={["HOME DEPOT WOODSTOCK", "901 JULIANA DR", "WOODSTOCK", "N4V 1B9"]} region="ON" country="CA">
            <Schedule title="Deliver" zoneLabel="End Zone" zone="N4V 1B9" />
          </Party>
        </PartyColumn>

        <Group $w={275} $pb={3}>
          <Legend>Options</Legend>
          <Row $align="flex-start" $gap={8}>
            <Stack $mt={2}>
              <Button type="button" $w={111} $h={23}><NoteIcon />Notes</Button>
              <Row $mt={10}><Button type="button" $w={111} $h={23}><NoteIcon />Ship Instructions</Button></Row>
              <Caption htmlFor="ops" $mt={4}>Operations Code</Caption>
              <Row $mt={2}><LookupField id="ops" w={103} value="FTL" label="Operations Code" /></Row>
              <Caption htmlFor="equip" $mt={4}>Requested Equipment</Caption>
              <Row $mt={2}><LookupField id="equip" w={103} label="Requested Equipment" /></Row>
              <Caption htmlFor="cab" $mt={3}>CA Brokerage</Caption>
              <Row $mt={2}><Combo id="cab" $w={113} $bold /></Row>
              <Caption htmlFor="usb">US Brokerage</Caption>
              <Row $mt={2}><Combo id="usb" $w={113} $bold /></Row>
            </Stack>
            <Stack>
              <Stack $pl={8}>
                <Caption htmlFor="level">Ser<U>v</U>ice Level</Caption>
                <LevelFrame><LevelSelect id="level"><option>STANDARD</option></LevelSelect></LevelFrame>
                <Caption htmlFor="wait" $dim $mt={11}>Wait Time Reviewed?</Caption>
                <Row $mt={2}><TextBox id="wait" $w={117} disabled /></Row>
              </Stack>
              <Caption htmlFor="pend" $dim $mt={8}>Billing Pendency</Caption>
              <Row $mt={2}><TextBox id="pend" $w={150} disabled /></Row>
            </Stack>
          </Row>
        </Group>

        <ActionColumn>
          {actions.map(([icon, text], i) => <Button key={i} type="button" $w={112} $h={23}>{icon}{text}</Button>)}
          <Button type="button" $w={112} $h={43}>{"SITE1\nFTL Freight"}</Button>
          <Button type="button" $w={112} $h={23}><PrinterIcon />Print</Button>
        </ActionColumn>

        <TraceColumn>
          <TraceFrame>
            <Grid $w={371}>
              <thead>
                <tr>
                  <HeadCell $w={12} $h={20} />
                  <HeadCell $w={101} $large>Trace Number</HeadCell>
                  <HeadCell $w={37} $sorted><SortMark>↓</SortMark>Type</HeadCell>
                  <HeadCell $w={68}>Description</HeadCell>
                  <HeadCell $w={34}>Ref.Q</HeadCell>
                  <HeadCell $w={63}>Created By</HeadCell>
                  <HeadCell $w={56}>Modified I</HeadCell>
                </tr>
              </thead>
              <tbody>
                <tr>
                  <BodyCell><RowMark /></BodyCell>
                  <BodyCell><Selected>1234566</Selected></BodyCell>
                  <BodyCell>B</BodyCell>
                  <BodyCell>Bill of Lading</BodyCell>
                  <BodyCell /><BodyCell /><BodyCell />
                </tr>
              </tbody>
            </Grid>
            <Scrollbar />
          </TraceFrame>
          <Row $mt={13} $pl={18} $gap={4}>
            <Caption htmlFor="edi">EDI SID</Caption>
            <TextBox id="edi" $w={124} />
          </Row>
          <Row $mt={3} $gap={4}>
            <RecordNavigator active={["first", "prev", "next", "last", "plus", "minus", "up", "refresh"]} />
            <Row $pl={6} $gap={4}>
              <Caption htmlFor="ttype">Type</Caption>
              <LookupField id="ttype" w={40} value="B" label="Type" />
            </Row>
            <Row $pl={4}><Caption as="span">Bill of Lading</Caption></Row>
          </Row>
        </TraceColumn>
      </FormArea>

      <TabStrip>
        {tabs.map(([t, w, left]) => <Tab key={t} type="button" $w={w} $left={left} $on={t === "Details"}>{t}</Tab>)}
      </TabStrip>
      <Page>
        <LoadGroup>
          <Legend $near>Load Details</Legend>
          <GridFrame>
            <Grid $w={1897}>
              <thead>
                <tr>
                  <HeadCell $w={11} $h={18} $large />
                  {loadColumns.map(([c, w]) => <HeadCell key={c} $w={w} $large>{c}</HeadCell>)}
                </tr>
              </thead>
              <tbody>
                <tr><BodyCell><RowMark /></BodyCell>{loadColumns.map(([c]) => <BodyCell key={c} />)}</tr>
              </tbody>
            </Grid>
            <Scrollbar />
          </GridFrame>
          <RateArea>
            <RecordNavigator active={["plus", "refresh"]} />
            <RatePanel>
              <ChoiceLine>
                <Check mixed label={<span>Manually <U>R</U>ated</span>} />
                <Check mixed dim label="Override Rate Sheet" />
              </ChoiceLine>
              <TextBox $w={176} readOnly aria-label="Rate description" />
              <LookupField w={58} dim label="rate sheet" />
            </RatePanel>
          </RateArea>
        </LoadGroup>
      </Page>

      <StatusBar>
        {[["Charges: $0.00", 100], ["X-Charges: $0.00", 110], ["Tax-1: $0.00", 85], ["Tax-2: $0.00", 84], ["Interliner: $0.00", 102]].map(([t, w]) => (
          <StatusRun key={t}><StatusCell $w={w} $center>{t}</StatusCell></StatusRun>
        ))}
        <StatusRun $grow>
          <StatusCell $w={77}>{"   Balanced:"}</StatusCell>
          <StatusCell $w={84} $line>{"u  Total: $0.00"}</StatusCell>
          <StatusCell $line>D</StatusCell>
          <StatusCell $w={15} $line />
        </StatusRun>
        <StatusRun>
          <StatusCell $w={59} $center>PROD5</StatusCell>
          <StatusCell $w={62} $line>ONT_LIVE</StatusCell>
          <StatusCell $w={15} $line>v</StatusCell>
          <StatusCell $w={123} $line>Pride Group Logistics</StatusCell>
          <StatusCell $w={15} $line>c</StatusCell>
          <StatusCell $w={64} $line>SSARAIVA</StatusCell>
          <StatusCell $w={15} $line>/</StatusCell>
          <StatusCell $w={30} $line>cap</StatusCell>
          <LockCell $w={45} $line><span>a</span><span>NUM</span></LockCell>
          <StatusCell $w={24} $line>J</StatusCell>
        </StatusRun>
      </StatusBar>

      <Taskbar>
        <Widget type="button">
          <svg width="28" height="30">
            <path d="M8 4h12v18H8z" fill="#49b6c8" /><path d="M2 11l15-4v18L5 28q-3 0-3-3z" fill="#7a4be0" /><path d="M17 9h9v12l-9 4z" fill="#a276f5" />
            <path d="M9 12c5 3 4 8 1 8s-4-3-2-5z" fill="#fff" />
            <Badge x={20} y={8} fill="#c42b1c">3</Badge>
          </svg>
          <span>Top Stories<Muted>NOAA laying off...</Muted></span>
        </Widget>
        <Dock>
          <StartButton type="button" aria-label="Start">
            <svg width="23" height="23" fill="#0f84dc"><path d="M0 0h11v11H0zM12 0h11v11H12zM0 12h11v11H0zM12 12h11v11H12z" /></svg>
          </StartButton>
          <SearchBox>
            <svg width="16" height="16" fill="none" stroke="#222" strokeWidth="1.600"><circle cx="7" cy="7" r="5.500" /><path d="M11 11l4 4" /></svg>
            <SearchInput placeholder="Search" aria-label="Search" />
            <svg width="46" height="27">
              <path d="M0 21q22-8 46 0-4 6-23 6T0 21z" fill="#b5712c" />
              <path d="M8 12h13l-2 12h-8z" fill="#3b3030" />
              <circle cx="8" cy="9" r="4" fill="#3f8a35" /><circle cx="20" cy="11" r="4" fill="#3f8a35" />
              <circle cx="14" cy="6" r="6" fill="#f0609c" /><circle cx="14" cy="6" r="2" fill="#f7c23c" />
              <path d="M43 2l-9 10" stroke="#1f6fc0" strokeWidth="3" /><path d="M35 9l3 3-5 9q-5-1-5-5z" fill="#7ea8cc" />
            </svg>
          </SearchBox>
          {apps.map((a) => (
            <AppButton key={a.name} type="button" aria-label={a.name} $bg={a.bg}>
              <svg width="32" height="30" viewBox="-3 -2 32 30">{a.art}</svg>
              <Running $c={a.run} $wide={a.wide} />
            </AppButton>
          ))}
        </Dock>
        <Tray>
          <svg width="12" height="8"><path d="M1 7l5-5 5 5" fill="none" stroke="#222" strokeWidth="1.500" /></svg>
          <svg width="18" height="12"><path d="M4 11.500a4 4 0 0 1-.5-7.500A6 6 0 0 1 13 3a4.500 4.500 0 0 1 1 8.500z" fill="#1b84dc" /><path d="M6 11.500q-3-4 3-5l5 5z" fill="#39a7f0" /></svg>
          <svg width="14" height="17" fill="none" stroke="#1d55a5" strokeWidth="1.300"><rect x="4.500" y="1" width="5" height="9" rx="2.500" /><path d="M2 7.500c0 6 10 6 10 0M7 12v4" /></svg>
          <TrayGroup>
            <svg width="17" height="17" fill="none" stroke="#222" strokeWidth="1.200"><path d="M10 2H1v10h13V9M4 15h7M12.500 8V5M11 1h4v4h-4z" /></svg>
            <svg width="17" height="15" fill="none" stroke="#222" strokeWidth="1.200"><path d="M1 5h3l4-4v13l-4-4H1zM10.500 5q2 2.500 0 5M13 3q3.500 4.500 0 9" /></svg>
            <Clock>9:24 AM<br />3/12/2025</Clock>
          </TrayGroup>
        </Tray>
      </Taskbar>
    </Desktop>
  );
}
